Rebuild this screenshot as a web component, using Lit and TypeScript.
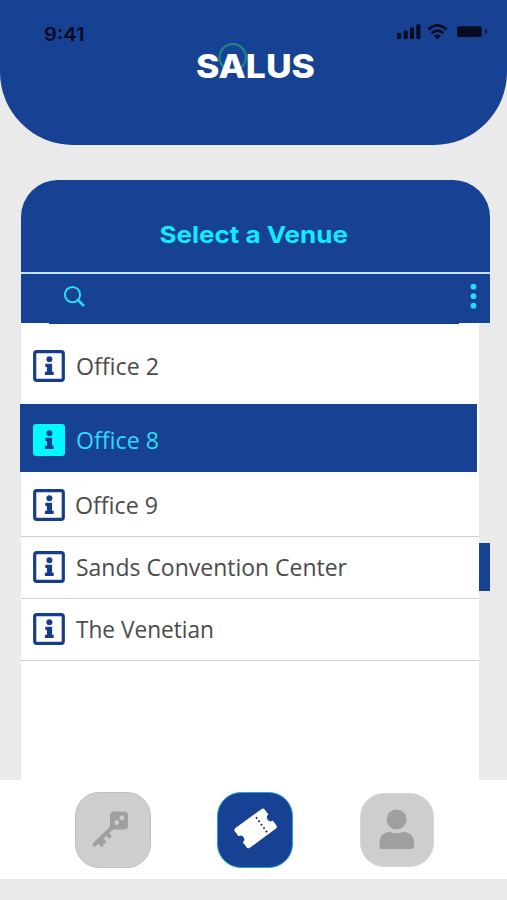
import { LitElement, html, svg, css } from "lit";
import { customElement } from "lit/decorators.js";
import { classMap } from "lit/directives/class-map.js";

interface Venue {
  name: string;
  width: number;
  kind: string;
  selected?: boolean;
}

const VENUES: Venue[] = [
  { name: "Office 2", width: 83, kind: "first" },
  { name: "Office 8", width: 83, kind: "selected", selected: true },
  { name: "Office 9", width: 83, kind: "after" },
  { name: "Sands Convention Center", width: 271, kind: "plain" },
  { name: "The Venetian", width: 138, kind: "plain" },
];

@customElement("venue-row")
export class VenueRow extends LitElement {
  static properties = { venue: { attribute: false } };
  declare venue: Venue;

  static styles = css`
    :host { display: block; }
    .row {
      box-sizing: border-box;
      display: flex;
      align-items: flex-start;
      height: 62px;
      padding: 14px 0 0 12px;
      border-bottom: 1px solid #cfcfcf;
      color: #4b4b4d;
      font-family: "Open Sans", "Noto Sans", sans-serif;
    }
    .first { height: 80px; padding-top: 26px; border: 0; }
    .selected {
      height: 68px;
      padding: 20px 0 0 13px;
      margin: 0 2px 0 -1px;
      border: 0;
      background: #174192;
      color: #2bdcfa;
    }
    .after { height: 65px; padding-top: 17px; }
    .icon { width: 32px; height: 32px; flex: none; display: block; }
    .name { margin-left: 11px; height: 32px; flex: none; display: block; overflow: visible; }
    .after .name { margin-left: 10px; }
    .name text { font-size: 24.5px; fill: currentColor; }
  `;

  render() {
    const v = this.venue;
    const ink = "#173c8a";
    return html`
      <div class=${classMap({ row: true, [v.kind]: true })}>
        <svg class="icon" viewBox="0 0 32 32">
          ${v.selected
            ? svg`<rect width="32" height="32" rx="3" fill="#00faff" />`
            : svg`<rect x="1.7" y="1.7" width="28.6" height="28.6" rx="2" fill="none" stroke=${ink} stroke-width="3.2" />`}
          <circle cx="16.4" cy="9.2" r="3" fill=${ink} />
          <path d="M12.3 13.7h6.8v8h1.6v3.4h-8.8v-3.4h2v-4.6h-1.6z" fill=${ink} />
        </svg>
        <svg class="name" width=${v.width} viewBox="0 0 ${v.width} 32">
          <text x="0" y="24.7" textLength=${v.width} lengthAdjust="spacingAndGlyphs">${v.name}</text>
        </svg>
      </div>
    `;
  }
}

@customElement("app-root")
export class AppRoot extends LitElement {
  static styles = css`
    :host {
      display: flex;
      flex-direction: column;
      width: 507px;
      height: 900px;
      overflow: hidden;
      background: #eaeaea;
    }
    svg { display: block; }
    .header {
      height: 145px;
      flex: none;
      background: #174192;
      border-radius: 0 0 73px 73px;
    }
    .card {
      width: 469px;
      height: 600px;
      margin: 35px 0 0 21px;
      flex: none;
    }
    .title {
      box-sizing: border-box;
      height: 92px;
      padding-top: 35px;
      border-radius: 37px 37px 0 0;
      background: #174192;
    }
    .search {
      box-sizing: border-box;
      display: flex;
      justify-content: space-between;
      align-items: flex-start;
      height: 51px;
      border-top: 2px solid #c3e2fa;
      background: #174192;
    }
    .glass { margin: 12px 0 0 42px; }
    .dots { margin: 9px 12px 0 0; }
    .body { display: flex; height: 457px; align-items: flex-start; }
    .list { width: 458px; height: 457px; background: #fff; }
    .edge { width: 410px; height: 1px; margin-left: 28px; background: #173a82; }
    .rows { display: block; }
    .thumb { width: 11px; height: 48px; margin-top: 220px; background: #174192; }
    .nav {
      box-sizing: border-box;
      height: 99px;
      flex: none;
      display: flex;
      background: #fff;
      padding: 12px 0 0 75px;
    }
    .tab {
      box-sizing: border-box;
      width: 76px;
      height: 76px;
      border: 1px solid #c0c0c0;
      border-radius: 24px;
      background: #cecece;
    }
    .active {
      margin-left: 66px;
      border: 1px solid #27a5cc;
      background: #174192;
    }
    .profile {
      width: 74px;
      height: 74px;
      margin: 1px 0 0 67px;
      border-color: #d8d8d8;
    }
  `;

  render() {
    return html`
      <header class="header">
        <svg width="507" height="145" viewBox="0 0 507 145">
          <text x="44" y="41" font-family="Inter, sans-serif" font-size="18.5" font-weight="600"
            fill="#050b24" textLength="40.5" lengthAdjust="spacingAndGlyphs">9:41</text>
          <g fill="#050b20">
            <rect x="397" y="33" width="4" height="6" rx="1.3" />
            <rect x="403.7" y="30.5" width="4" height="8.5" rx="1.3" />
            <rect x="410" y="27.5" width="4" height="11.5" rx="1.3" />
            <rect x="416.3" y="24.3" width="4.2" height="14.7" rx="1.3" />
            <rect x="457" y="26.3" width="24.6" height="10.6" rx="2" />
            <path d="M485.2 28.8q3.6 2.7 0 5.4z" />
            <path d="M434 35.8q3.5-2.6 7 0l-3.5 3.4z" />
          </g>
          <g fill="none" stroke="#050b20" stroke-width="2.6">
            <path d="M428.3 29.6q9.2-8.4 18.4 0" />
            <path d="M431.7 33.2q5.8-5.2 11.6 0" />
          </g>
          <circle cx="232.7" cy="57.3" r="13.2" fill="none" stroke="#1c8a80" stroke-width="2" />
          <text x="196" y="77.8" font-family="Inter, sans-serif" font-size="32.5" font-weight="800"
            fill="#fff" textLength="119" lengthAdjust="spacingAndGlyphs">SALUS</text>
        </svg>
      </header>
      <main class="card">
        <div class="title">
          <svg width="469" height="46" viewBox="0 0 469 46">
            <text x="138.5" y="28.3" font-family="Inter, sans-serif" font-size="23.5" font-weight="700"
              fill="#10ecff" textLength="188.5" lengthAdjust="spacingAndGlyphs">Select a Venue</text>
          </svg>
        </div>
        <div class="search">
          <svg class="glass" width="24" height="24" viewBox="0 0 24 24" fill="none" stroke="#2bdcfa" stroke-width="2">
            <circle cx="9.5" cy="8.6" r="7.6" />
            <path d="M15 14l6 6" stroke-width="2.5" />
          </svg>
          <svg class="dots" width="9" height="28" viewBox="0 0 9 28" fill="#2bdcfa">
            <circle cx="4.5" cy="3.7" r="2.9" />
            <circle cx="4.5" cy="13.2" r="2.9" />
            <circle cx="4.5" cy="22.7" r="2.9" />
          </svg>
        </div>
        <div class="body">
          <div class="list">
            <div class="edge"></div>
            ${VENUES.map((v) => html`<venue-row class="rows" .venue=${v}></venue-row>`)}
          </div>
          <div class="thumb"></div>
        </div>
      </main>
      <nav class="nav">
        <div class="tab">
          <svg width="74" height="74" viewBox="0 0 74 74">
            <path d="M36.5 34L18.5 51.5" stroke="#a0a0a0" stroke-width="4" stroke-linecap="round" fill="none" />
            <path d="M22.5 48.5l3.2 3.2M25.5 46l2.6 2.6M31 41l2.4 2.4" stroke="#a0a0a0" stroke-width="4" stroke-linecap="round" fill="none" />
            <rect x="34" y="18.5" width="18" height="18" rx="4" fill="#a0a0a0" />
            <circle cx="45.8" cy="24.8" r="2.3" fill="#cecece" />
            <circle cx="40.8" cy="29.6" r="2.3" fill="#cecece" />
          </svg>
        </div>
        <div class="tab active">
          <svg width="74" height="74" viewBox="0 0 74 74">
            <g transform="translate(37.6 35.4) rotate(-36)">
              <path d="M-16 -12.2H16Q18.5 -12.2 18.5 -9.7V-3.6A3.6 3.6 0 0 0 18.5 3.6V9.7Q18.5 12.2 16 12.2H-16Q-18.5 12.2 -18.5 9.7V3.6A3.6 3.6 0 0 0 -18.5 -3.6V-9.7Q-18.5 -12.2 -16 -12.2Z" fill="#fff" />
              <path d="M7 -8.8V10" stroke="#173064" stroke-width="1.8" stroke-dasharray="1.8 2.4" />
            </g>
          </svg>
        </div>
        <div class="tab profile">
          <svg width="72" height="72" viewBox="0 0 72 72" fill="#9f9f9f">
            <circle cx="35.6" cy="25.4" r="10" />
            <path d="M29 37.8Q35.6 40.8 42.2 37.8Q53 38.5 53 49V52Q53 55 50 55H21.5Q18.5 55 18.5 52V49Q18.5 38.5 29 37.8Z" />
          </svg>
        </div>
      </nav>
    `;
  }
}
